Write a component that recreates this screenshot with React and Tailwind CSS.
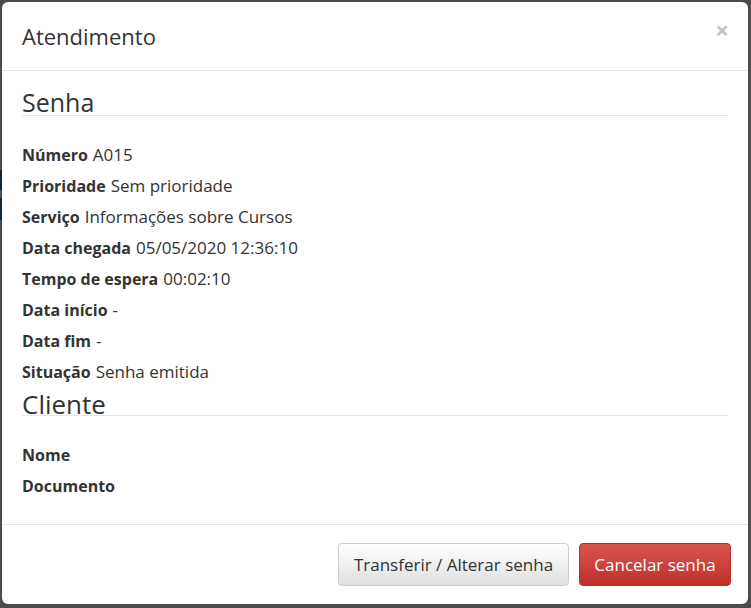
import React from 'react';

const senha = [
  ['Número', 'A015'],
  ['Prioridade', 'Sem prioridade'],
  ['Serviço', 'Informações sobre Cursos'],
  ['Data chegada', '05/05/2020 12:36:10'],
  ['Tempo de espera', '00:02:10'],
  ['Data início', '-'],
  ['Data fim', '-'],
  ['Situação', 'Senha emitida'],
];

const cliente = [
  ['Nome', ''],
  ['Documento', ''],
];

function Row({ label, value }) {
  return (
    <div className="h-[31px] flex items-center text-[#333]">
      <span className="font-bold text-[16px]">{label}</span>
      {value && <span className="ml-[5px] text-[17px]">{value}</span>}
    </div>
  );
}

export default function App() {
  return (
    <div
      className="w-[751px] h-[608px] bg-[#4b4b4b] flex overflow-hidden"
      style={{ fontFamily: '"Open Sans", "Noto Sans", sans-serif' }}
    >
      {/* pedaço da página por trás do backdrop */}
      <div className="w-[2px] flex flex-col pt-[170px]">
        <div className="h-[20px] bg-[#10273a]" />
        <div className="h-[8px] bg-[#4b4b4b]" />
        <div className="h-[22px] bg-[#10273a]" />
      </div>

      <div className="mt-[2px] w-[746px] h-[602px] bg-white rounded-[6px] flex flex-col">
        <div className="h-[69px] px-[20px] flex items-center justify-between border-b border-[#e5e5e5]">
          <h4 className="text-[22px] text-[#333] leading-none">Atendimento</h4>
          <span className="text-[24px] font-bold text-[#c4c4c4] leading-none mr-[-1px] mb-[12px]">×</span>
        </div>

        <div className="flex-1 px-[20px]">
          <div className="h-[45px] flex items-end border-b border-[#e5e5e5]">
            <h3 className="text-[25px] text-[#333] leading-[30px] mb-[-2px]">Senha</h3>
          </div>
          <div className="pt-[23px]">
            {senha.map(([l, v]) => (
              <Row key={l} label={l} value={v} />
            ))}
          </div>
          <div className="h-[29px] flex items-end border-b border-[#e5e5e5]">
            <h3 className="text-[26px] text-[#333] leading-[30px] mb-[-4px]">Cliente</h3>
          </div>
          <div className="pt-[23px]">
            {cliente.map(([l, v]) => (
              <Row key={l} label={l} value={v} />
            ))}
          </div>
        </div>

        <div className="h-[80px] border-t border-[#e5e5e5] flex items-center justify-end gap-[10px] pr-[17px]">
          <button className="h-[43px] w-[231px] rounded-[4px] border border-[#ccc] bg-gradient-to-b from-white to-[#e0e0e0] text-[17px] text-[#333]">
            Transferir / Alterar senha
          </button>
          <button className="h-[43px] w-[152px] rounded-[4px] border border-[#b92c28] bg-gradient-to-b from-[#d9534f] to-[#c12e2a] text-[17px] text-white">
            Cancelar senha
          </button>
        </div>
      </div>
    </div>
  );
}
